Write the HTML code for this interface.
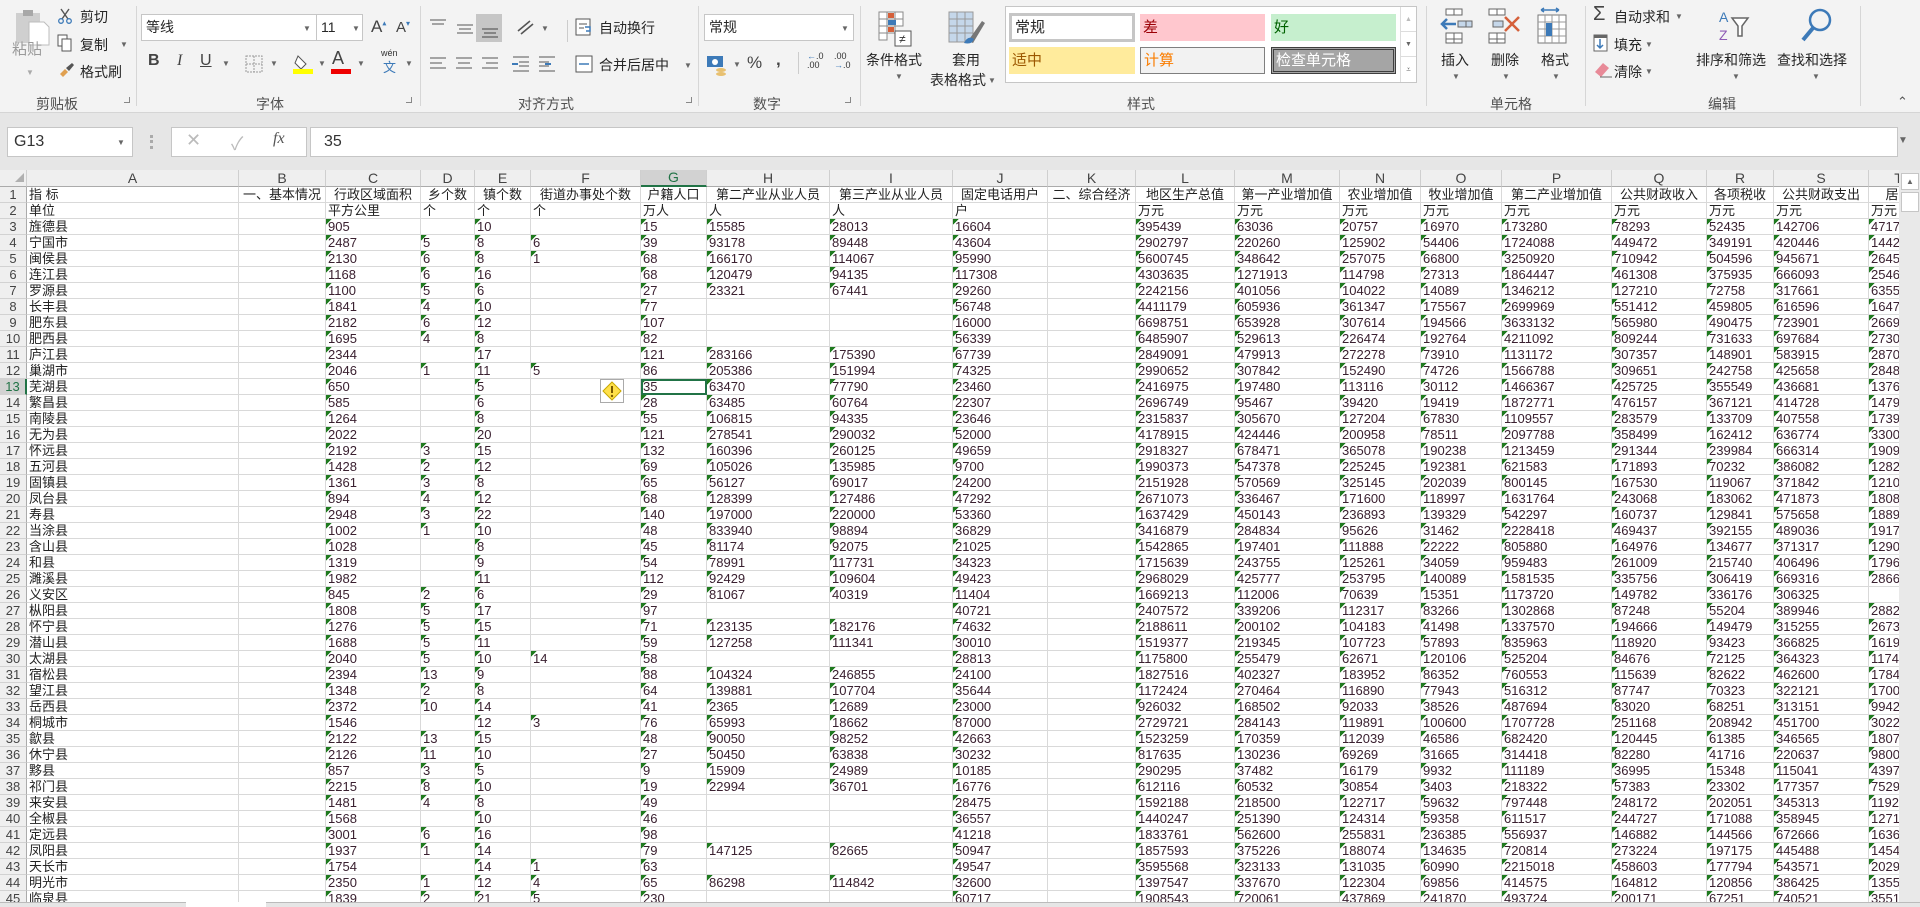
<!DOCTYPE html>
<html><head><meta charset="utf-8">
<style>
*{box-sizing:border-box;margin:0;padding:0}
body{width:1920px;height:907px;overflow:hidden;background:#e6e6e6;font-family:"Liberation Sans","Noto Sans CJK SC",sans-serif;position:relative;color:#262626}
.ab{position:absolute;white-space:nowrap}
#rib{position:absolute;left:0;top:0;width:1920px;height:113px;background:#f3f3f3;border-bottom:1px solid #d5d5d5}
.t{position:absolute;white-space:nowrap;font-size:14px;color:#262626}
.gl{position:absolute;top:94px;font-size:14px;color:#505050;white-space:nowrap}
.sep{position:absolute;top:6px;width:1px;height:100px;background:#d6d6d6}
.box{position:absolute;background:#fff;border:1px solid #c6c6c6;font-size:14px;padding-left:4px;line-height:25px}
.dd{position:absolute;font-size:8px;color:#666}
.corner{position:absolute;width:6px;height:6px;border-right:1px solid #888;border-bottom:1px solid #888}
#grid{position:absolute;left:0;top:170px;width:1899px;height:737px;overflow:hidden;background:#fff}
table{border-collapse:separate;border-spacing:0;table-layout:fixed;width:1929px;font-size:13px}
td,th{height:16px;line-height:15px;border-right:1px solid #d9d9d9;border-bottom:1px solid #d9d9d9;white-space:nowrap;overflow:hidden;padding:0 2px;font-weight:normal;text-align:left;color:#222}
thead th{background:#efefef;color:#444;text-align:center;border-right:1px solid #cfcfcf;border-bottom:1px solid #ababab;font-size:14px}
tbody th{background:#efefef;color:#444;text-align:center;border-right:1px solid #ababab;border-bottom:1px solid #d2d2d2;padding:0}
thead th.sel{background:#d2d2d2;color:#217346;border-bottom:2px solid #217346}
tbody th.sel{background:#d2d2d2;color:#217346;border-right:2px solid #217346}
tr.h1 td{text-align:center}
tr.h1 td:nth-child(2){text-align:left}
tr.d td:nth-child(n+4):not(:empty){background:linear-gradient(135deg,#1f7a1f 0,#1f7a1f 4px,transparent 4px) no-repeat 0 0/7px 7px}
tr.d td{color:#3a2030}
tr.d td:nth-child(2){color:#222}
</style></head><body>
<div id="rib">
<svg class="ab" style="left:14px;top:8px" width="38" height="38" viewBox="0 0 38 38"><rect x="2" y="5" width="24" height="30" fill="#cfcfcf"/><rect x="9" y="2" width="10" height="6" fill="#a8a8a8"/><path d="M15 14h15l5 5v18H15z" fill="#fff" stroke="#bdbdbd"/></svg>
<div class="t" style="left:12px;top:38px;color:#9a9a9a;font-size:15px">粘贴</div>
<div class="dd" style="left:26px;top:68px;color:#aaa">▼</div>
<svg class="ab" style="left:57px;top:8px" width="16" height="16" viewBox="0 0 16 16"><path d="M4 1l7 10M12 1L5 11" stroke="#555" stroke-width="1.4"/><circle cx="4" cy="13" r="2.3" fill="none" stroke="#3d7ab8" stroke-width="1.3"/><circle cx="12" cy="13" r="2.3" fill="none" stroke="#3d7ab8" stroke-width="1.3"/></svg>
<div class="t" style="left:80px;top:7px">剪切</div>
<svg class="ab" style="left:57px;top:34px" width="16" height="18" viewBox="0 0 16 18"><rect x="1" y="1" width="9" height="11" fill="#fff" stroke="#555"/><rect x="5" y="5" width="9" height="12" fill="#fff" stroke="#555"/></svg>
<div class="t" style="left:80px;top:35px">复制</div><div class="dd" style="left:120px;top:40px">▼</div>
<svg class="ab" style="left:57px;top:62px" width="18" height="16" viewBox="0 0 18 16"><path d="M3 12l5-5 3 3-5 5z" fill="#e0a050"/><path d="M9 6l6-5 2 2-5 6z" fill="#555"/></svg>
<div class="t" style="left:80px;top:62px">格式刷</div>
<div class="gl" style="left:36px;top:94px">剪贴板</div><div class="corner" style="left:124px;top:97px"></div>
<div class="sep" style="left:136px"></div>
<div class="box" style="left:141px;top:14px;width:176px;height:27px">等线</div><div class="dd" style="left:303px;top:24px">▼</div>
<div class="box" style="left:316px;top:14px;width:47px;height:27px">11</div><div class="dd" style="left:352px;top:24px">▼</div>
<div class="t" style="left:371px;top:17px;font-size:17px;color:#444">A<sup style="font-size:8px;color:#3d7ab8">▴</sup></div>
<div class="t" style="left:396px;top:19px;font-size:15px;color:#444">A<sup style="font-size:8px;color:#3d7ab8">▾</sup></div>
<div class="t" style="left:148px;top:52px;font-weight:bold;font-size:16px;color:#444">B</div>
<div class="t" style="left:177px;top:52px;font-style:italic;font-size:16px;color:#444;font-family:'Liberation Serif',serif">I</div>
<div class="t" style="left:200px;top:52px;text-decoration:underline;font-size:16px;color:#444">U</div><div class="dd" style="left:222px;top:59px">▼</div>
<svg class="ab" style="left:245px;top:55px" width="18" height="18"><rect x="1" y="1" width="16" height="16" fill="none" stroke="#999" stroke-dasharray="2 1"/><path d="M9 1v16M1 9h16" stroke="#999" stroke-dasharray="2 1"/></svg><div class="dd" style="left:270px;top:59px">▼</div>
<svg class="ab" style="left:292px;top:52px" width="22" height="22"><path d="M6 4l8 8-5 5-6-6z" fill="#fff" stroke="#555"/><rect x="1" y="17" width="20" height="5" fill="#ffff00"/></svg><div class="dd" style="left:318px;top:59px">▼</div>
<div class="t" style="left:332px;top:48px;font-size:18px;color:#444">A</div><div class="ab" style="left:331px;top:69px;width:20px;height:5px;background:#e00"></div><div class="dd" style="left:357px;top:59px">▼</div>
<div class="t" style="left:381px;top:48px;font-size:9px;color:#333">wén</div><div class="t" style="left:383px;top:57px;font-size:13px;color:#3d7ab8">文</div><div class="dd" style="left:405px;top:59px">▼</div>
<div class="gl" style="left:256px">字体</div><div class="corner" style="left:406px;top:97px"></div>
<div class="sep" style="left:420px"></div>
<svg class="ab" style="left:427px;top:14px" width="80" height="28"><path d="M3 6h16M5 10h12" stroke="#555"/><path d="M30 11h16M32 15h12M30 19h16" stroke="#555"/><rect x="49" y="0" width="26" height="28" fill="#c6c6c6"/><path d="M55 15h16M57 19h12M55 23h16" stroke="#444"/></svg>
<svg class="ab" style="left:515px;top:17px" width="22" height="20"><path d="M3 14l12-10M6 17l12-10" stroke="#555" stroke-width="1.6"/></svg><div class="dd" style="left:541px;top:24px">▼</div>
<div class="sep" style="left:567px;top:20px;height:22px;background:#ccc"></div>
<svg class="ab" style="left:575px;top:17px" width="18" height="20"><rect x="1" y="2" width="14" height="16" fill="#fff" stroke="#555"/><path d="M4 7h8M4 11h5" stroke="#555"/><path d="M10 10h5v4h-4" stroke="#3d7ab8" fill="none" stroke-width="1.5"/></svg>
<div class="t" style="left:599px;top:18px">自动换行</div>
<svg class="ab" style="left:427px;top:55px" width="150" height="20"><path d="M3 3h16M3 8h12M3 13h16" stroke="#555"/><path d="M29 3h16M31 8h12M29 13h16" stroke="#555"/><path d="M55 3h16M59 8h12M55 13h16" stroke="#555"/><path d="M86 2h16M92 7h10M92 11h10M86 16h16" stroke="#555"/><path d="M91 9h-6" stroke="#3d7ab8" stroke-width="2"/><path d="M112 2h16M112 7h10M112 11h10M112 16h16" stroke="#555"/><path d="M118 9h6" stroke="#3d7ab8" stroke-width="2"/></svg>
<svg class="ab" style="left:575px;top:55px" width="18" height="18"><rect x="1" y="1" width="16" height="16" fill="#fff" stroke="#555"/><path d="M4 9h10" stroke="#3d7ab8" stroke-width="1.5"/></svg>
<div class="t" style="left:599px;top:55px">合并后居中</div><div class="dd" style="left:684px;top:61px">▼</div>
<div class="gl" style="left:518px">对齐方式</div><div class="corner" style="left:686px;top:97px"></div>
<div class="sep" style="left:698px"></div>
<div class="box" style="left:704px;top:14px;width:150px;height:27px">常规</div><div class="dd" style="left:841px;top:24px">▼</div>
<svg class="ab" style="left:706px;top:55px" width="22" height="22"><rect x="1" y="1" width="16" height="11" fill="#3d7ab8"/><circle cx="9" cy="7" r="3" fill="#fff"/><ellipse cx="15" cy="15" rx="5" ry="2" fill="#e8c070"/><ellipse cx="15" cy="19" rx="5" ry="2" fill="#e8c070"/></svg><div class="dd" style="left:733px;top:60px">▼</div>
<div class="t" style="left:747px;top:53px;font-size:17px;color:#444">%</div>
<div class="t" style="left:776px;top:50px;font-size:17px;color:#444;font-weight:bold">,</div>
<div class="sep" style="left:798px;top:52px;height:22px;background:#ccc"></div>
<div class="t" style="left:807px;top:52px;font-size:9px;color:#333;line-height:9px"><span style="color:#3d7ab8">←</span>.0<br>.00</div>
<div class="t" style="left:834px;top:52px;font-size:9px;color:#333;line-height:9px">.00<br><span style="color:#3d7ab8">→</span>.0</div>
<div class="gl" style="left:753px">数字</div><div class="corner" style="left:845px;top:97px"></div>
<div class="sep" style="left:860px"></div>
<svg class="ab" style="left:878px;top:11px" width="38" height="36"><g stroke="#888" fill="#fff"><rect x="1" y="1" width="8" height="7"/><rect x="9" y="1" width="8" height="7"/><rect x="17" y="1" width="8" height="7"/><rect x="1" y="8" width="8" height="7"/><rect x="9" y="8" width="8" height="7"/><rect x="17" y="8" width="8" height="7"/><rect x="1" y="15" width="8" height="7"/><rect x="9" y="15" width="8" height="7"/><rect x="1" y="22" width="8" height="7"/></g><rect x="10" y="2" width="6" height="5" fill="#d5603a"/><rect x="10" y="9" width="8" height="5" fill="#3d7ab8"/><rect x="10" y="16" width="6" height="5" fill="#d5603a"/><rect x="17" y="20" width="16" height="15" fill="#fff" stroke="#555"/><text x="21" y="32" font-size="12" fill="#333">≠</text></svg>
<div class="t" style="left:866px;top:50px">条件格式</div><div class="dd" style="left:895px;top:72px">▼</div>
<svg class="ab" style="left:948px;top:11px" width="38" height="36"><g stroke="#999" fill="#c5d7ea"><rect x="1" y="1" width="24" height="30"/></g><path d="M1 8h24M1 15h24M1 22h24M9 1v30M17 1v30" stroke="#999"/><path d="M20 30l14-20 3 2-12 20z" fill="#777"/><path d="M16 32q4-8 10-4q-2 6-10 4z" fill="#3d7ab8"/></svg>
<div class="t" style="left:952px;top:50px">套用</div>
<div class="t" style="left:930px;top:70px">表格格式</div><div class="dd" style="left:988px;top:76px">▼</div>
<div class="ab" style="left:1005px;top:6px;width:412px;height:77px;background:#fff;border:1px solid #c6c6c6"></div>
<div class="ab" style="left:1009px;top:13px;width:126px;height:29px;border:3px solid #c6c6c6;background:#fff;font-size:15px;line-height:23px;padding-left:3px">常规</div>
<div class="ab" style="left:1140px;top:14px;width:125px;height:27px;background:#ffc7ce;color:#9c0006;font-size:15px;line-height:27px;padding-left:3px">差</div>
<div class="ab" style="left:1271px;top:14px;width:125px;height:27px;background:#c6efce;color:#006100;font-size:15px;line-height:27px;padding-left:3px">好</div>
<div class="ab" style="left:1009px;top:47px;width:126px;height:27px;background:#ffeb9c;color:#9c5700;font-size:15px;line-height:27px;padding-left:3px">适中</div>
<div class="ab" style="left:1140px;top:47px;width:125px;height:27px;background:#f2f2f2;border:1px solid #7f7f7f;color:#fa7d00;font-size:15px;line-height:25px;padding-left:3px">计算</div>
<div class="ab" style="left:1271px;top:47px;width:125px;height:27px;background:#a5a5a5;border:3px double #3f3f3f;color:#fff;font-size:15px;line-height:21px;padding-left:2px">检查单元格</div>
<div class="ab" style="left:1400px;top:7px;width:16px;height:75px;border-left:1px solid #ddd"><div style="height:25px;border-bottom:1px solid #ddd;font-size:7px;color:#bbb;text-align:center;line-height:25px">▲</div><div style="height:25px;border-bottom:1px solid #ddd;font-size:7px;color:#666;text-align:center;line-height:25px">▼</div><div style="font-size:8px;color:#666;text-align:center;line-height:25px">⩡</div></div>
<div class="gl" style="left:1127px">样式</div>
<div class="sep" style="left:1426px"></div>
<svg class="ab" style="left:1438px;top:8px" width="36" height="36"><g fill="#fff" stroke="#666"><rect x="8" y="1" width="8" height="6"/><rect x="16" y="1" width="8" height="6"/><rect x="8" y="25" width="8" height="6"/><rect x="16" y="25" width="8" height="6"/><rect x="8" y="31" width="8" height="4"/><rect x="16" y="31" width="8" height="4"/><rect x="20" y="13" width="8" height="6" fill="#c5d7ea"/><rect x="28" y="13" width="6" height="6" fill="#c5d7ea"/></g><path d="M18 16H4M9 11l-5 5 5 5" stroke="#3d7ab8" stroke-width="2.5" fill="none"/></svg>
<div class="t" style="left:1441px;top:50px">插入</div><div class="dd" style="left:1452px;top:72px">▼</div>
<svg class="ab" style="left:1488px;top:8px" width="36" height="36"><g fill="#fff" stroke="#666"><rect x="1" y="1" width="8" height="6"/><rect x="9" y="1" width="8" height="6"/><rect x="1" y="25" width="8" height="6"/><rect x="9" y="25" width="8" height="6"/><rect x="1" y="31" width="8" height="4"/><rect x="9" y="31" width="8" height="4"/><rect x="5" y="13" width="10" height="6" fill="#c5d7ea"/></g><path d="M17 9l14 14M31 9L17 23" stroke="#d5603a" stroke-width="2.5"/></svg>
<div class="t" style="left:1491px;top:50px">删除</div><div class="dd" style="left:1502px;top:72px">▼</div>
<svg class="ab" style="left:1537px;top:6px" width="36" height="40"><path d="M4 4h18M4 4l3-2M4 4l3 2M22 4l-3-2M22 4l-3 2" stroke="#3d7ab8" stroke-width="1.5" fill="none"/><g fill="#fff" stroke="#777"><rect x="1" y="9" width="28" height="28"/></g><path d="M1 16h28M1 23h28M1 30h28M8 9v28M15 9v28M22 9v28" stroke="#999"/><rect x="9" y="17" width="6" height="13" fill="#3d7ab8"/></svg>
<div class="t" style="left:1541px;top:50px">格式</div><div class="dd" style="left:1552px;top:72px">▼</div>
<div class="gl" style="left:1490px">单元格</div>
<div class="sep" style="left:1585px"></div>
<div class="t" style="left:1593px;top:3px;font-size:20px;color:#444">Σ</div>
<div class="t" style="left:1614px;top:7px">自动求和</div><div class="dd" style="left:1675px;top:12px">▼</div>
<svg class="ab" style="left:1593px;top:34px" width="16" height="18"><rect x="1" y="1" width="13" height="16" fill="#fff" stroke="#666"/><rect x="1" y="1" width="13" height="3" fill="#666"/><path d="M7 5v9M4 11l3 3 3-3" stroke="#3d7ab8" stroke-width="1.5" fill="none"/></svg>
<div class="t" style="left:1614px;top:35px">填充</div><div class="dd" style="left:1645px;top:40px">▼</div>
<svg class="ab" style="left:1593px;top:60px" width="20" height="18"><path d="M2 12l8-9 6 5-8 9z" fill="#e88a98"/><path d="M7 17h12" stroke="#666"/></svg>
<div class="t" style="left:1614px;top:62px">清除</div><div class="dd" style="left:1645px;top:67px">▼</div>
<svg class="ab" style="left:1718px;top:8px" width="36" height="36"><text x="1" y="14" font-size="14" fill="#3d7ab8" font-family="Liberation Sans">A</text><text x="1" y="32" font-size="14" fill="#8e5bb5" font-family="Liberation Sans">Z</text><path d="M14 10h16l-6 8v10h-4V18z" fill="#fff" stroke="#666" stroke-width="1.5"/></svg>
<div class="t" style="left:1696px;top:50px">排序和筛选</div><div class="dd" style="left:1732px;top:72px">▼</div>
<svg class="ab" style="left:1798px;top:6px" width="36" height="40"><circle cx="22" cy="14" r="10" fill="none" stroke="#3d7ab8" stroke-width="2.5"/><path d="M15 22L5 34" stroke="#3d7ab8" stroke-width="4"/></svg>
<div class="t" style="left:1777px;top:50px">查找和选择</div><div class="dd" style="left:1812px;top:72px">▼</div>
<div class="gl" style="left:1708px">编辑</div>
<div class="sep" style="left:1860px"></div>
<div class="t" style="left:1897px;top:94px;font-size:13px;color:#555">⌃</div>
</div>
<div class="ab" style="left:7px;top:127px;width:126px;height:30px;background:#fff;border:1px solid #c6c6c6;font-size:16px;line-height:28px;padding-left:6px;color:#333">G13</div>
<div class="dd" style="left:117px;top:138px">▼</div>
<div class="ab" style="left:150px;top:135px;width:3px;height:14px;border-left:3px dotted #aaa"></div>
<div class="ab" style="left:171px;top:127px;width:136px;height:30px;background:#fff;border:1px solid #c6c6c6"></div>
<div class="ab" style="left:186px;top:130px;font-size:18px;color:#bbb">✕</div>
<div class="ab" style="left:231px;top:130px;font-size:18px;color:#bbb">✓</div>
<div class="ab" style="left:273px;top:130px;font-size:16px;color:#555;font-style:italic;font-family:'Liberation Serif',serif">fx</div>
<div class="ab" style="left:310px;top:127px;width:1588px;height:30px;background:#fff;border:1px solid #c6c6c6;font-size:16px;line-height:28px;padding-left:13px;color:#333">35</div>
<div class="ab" style="left:1898px;top:135px;font-size:10px;color:#666">▼</div>
<div id="grid">
<table>
<colgroup><col style="width:27px"><col style="width:212px"><col style="width:87px"><col style="width:95px"><col style="width:54px"><col style="width:56px"><col style="width:110px"><col style="width:66px"><col style="width:123px"><col style="width:123px"><col style="width:95px"><col style="width:88px"><col style="width:99px"><col style="width:105px"><col style="width:81px"><col style="width:81px"><col style="width:110px"><col style="width:95px"><col style="width:67px"><col style="width:95px"><col style="width:60px"></colgroup>
<thead><tr><th style="font-size:9px;color:#b0b0b0;text-align:right">◢</th><th>A</th><th>B</th><th>C</th><th>D</th><th>E</th><th>F</th><th class="sel">G</th><th>H</th><th>I</th><th>J</th><th>K</th><th>L</th><th>M</th><th>N</th><th>O</th><th>P</th><th>Q</th><th>R</th><th>S</th><th>T</th></tr></thead>
<tbody>
<tr class="h1"><th>1</th><td>指 标</td><td>一、基本情况</td><td>行政区域面积</td><td>乡个数</td><td>镇个数</td><td>街道办事处个数</td><td>户籍人口</td><td>第二产业从业人员</td><td>第三产业从业人员</td><td>固定电话用户</td><td>二、综合经济</td><td>地区生产总值</td><td>第一产业增加值</td><td>农业增加值</td><td>牧业增加值</td><td>第二产业增加值</td><td>公共财政收入</td><td>各项税收</td><td>公共财政支出</td><td>居民</td></tr>
<tr><th>2</th><td>单位</td><td></td><td>平方公里</td><td>个</td><td>个</td><td>个</td><td>万人</td><td>人</td><td>人</td><td>户</td><td></td><td>万元</td><td>万元</td><td>万元</td><td>万元</td><td>万元</td><td>万元</td><td>万元</td><td>万元</td><td>万元</td></tr>
<tr class="d"><th>3</th><td>旌德县</td><td></td><td>905</td><td></td><td>10</td><td></td><td>15</td><td>15585</td><td>28013</td><td>16604</td><td></td><td>395439</td><td>63036</td><td>20757</td><td>16970</td><td>173280</td><td>78293</td><td>52435</td><td>142706</td><td>4717</td></tr>
<tr class="d"><th>4</th><td>宁国市</td><td></td><td>2487</td><td>5</td><td>8</td><td>6</td><td>39</td><td>93178</td><td>89448</td><td>43604</td><td></td><td>2902797</td><td>220260</td><td>125902</td><td>54406</td><td>1724088</td><td>449472</td><td>349191</td><td>420446</td><td>1442</td></tr>
<tr class="d"><th>5</th><td>闽侯县</td><td></td><td>2130</td><td>6</td><td>8</td><td>1</td><td>68</td><td>166170</td><td>114067</td><td>95990</td><td></td><td>5600745</td><td>348642</td><td>257075</td><td>66800</td><td>3250920</td><td>710942</td><td>504596</td><td>945671</td><td>2645</td></tr>
<tr class="d"><th>6</th><td>连江县</td><td></td><td>1168</td><td>6</td><td>16</td><td></td><td>68</td><td>120479</td><td>94135</td><td>117308</td><td></td><td>4303635</td><td>1271913</td><td>114798</td><td>27313</td><td>1864447</td><td>461308</td><td>375935</td><td>666093</td><td>2546</td></tr>
<tr class="d"><th>7</th><td>罗源县</td><td></td><td>1100</td><td>5</td><td>6</td><td></td><td>27</td><td>23321</td><td>67441</td><td>29260</td><td></td><td>2242156</td><td>401056</td><td>104022</td><td>14089</td><td>1346212</td><td>127210</td><td>72758</td><td>317661</td><td>6355</td></tr>
<tr class="d"><th>8</th><td>长丰县</td><td></td><td>1841</td><td>4</td><td>10</td><td></td><td>77</td><td></td><td></td><td>56748</td><td></td><td>4411179</td><td>605936</td><td>361347</td><td>175567</td><td>2699969</td><td>551412</td><td>459805</td><td>616596</td><td>1647</td></tr>
<tr class="d"><th>9</th><td>肥东县</td><td></td><td>2182</td><td>6</td><td>12</td><td></td><td>107</td><td></td><td></td><td>16000</td><td></td><td>6698751</td><td>653928</td><td>307614</td><td>194566</td><td>3633132</td><td>565980</td><td>490475</td><td>723901</td><td>2669</td></tr>
<tr class="d"><th>10</th><td>肥西县</td><td></td><td>1695</td><td>4</td><td>8</td><td></td><td>82</td><td></td><td></td><td>56339</td><td></td><td>6485907</td><td>529613</td><td>226474</td><td>192764</td><td>4211092</td><td>809244</td><td>731633</td><td>697684</td><td>2730</td></tr>
<tr class="d"><th>11</th><td>庐江县</td><td></td><td>2344</td><td></td><td>17</td><td></td><td>121</td><td>283166</td><td>175390</td><td>67739</td><td></td><td>2849091</td><td>479913</td><td>272278</td><td>73910</td><td>1131172</td><td>307357</td><td>148901</td><td>583915</td><td>2870</td></tr>
<tr class="d"><th>12</th><td>巢湖市</td><td></td><td>2046</td><td>1</td><td>11</td><td>5</td><td>86</td><td>205386</td><td>151994</td><td>74325</td><td></td><td>2990652</td><td>307842</td><td>152490</td><td>74726</td><td>1566788</td><td>309651</td><td>242758</td><td>425658</td><td>2848</td></tr>
<tr class="d"><th class="sel">13</th><td>芜湖县</td><td></td><td>650</td><td></td><td>5</td><td></td><td style="outline:2px solid #217346;outline-offset:-2px">35</td><td>63470</td><td>77790</td><td>23460</td><td></td><td>2416975</td><td>197480</td><td>113116</td><td>30112</td><td>1466367</td><td>425725</td><td>355549</td><td>436681</td><td>1376</td></tr>
<tr class="d"><th>14</th><td>繁昌县</td><td></td><td>585</td><td></td><td>6</td><td></td><td>28</td><td>63485</td><td>60764</td><td>22307</td><td></td><td>2696749</td><td>95467</td><td>39420</td><td>19419</td><td>1872771</td><td>476157</td><td>367121</td><td>414728</td><td>1479</td></tr>
<tr class="d"><th>15</th><td>南陵县</td><td></td><td>1264</td><td></td><td>8</td><td></td><td>55</td><td>106815</td><td>94335</td><td>23646</td><td></td><td>2315837</td><td>305670</td><td>127204</td><td>67830</td><td>1109557</td><td>283579</td><td>133709</td><td>407558</td><td>1739</td></tr>
<tr class="d"><th>16</th><td>无为县</td><td></td><td>2022</td><td></td><td>20</td><td></td><td>121</td><td>278541</td><td>290032</td><td>52000</td><td></td><td>4178915</td><td>424446</td><td>200958</td><td>78511</td><td>2097788</td><td>358499</td><td>162412</td><td>636774</td><td>3300</td></tr>
<tr class="d"><th>17</th><td>怀远县</td><td></td><td>2192</td><td>3</td><td>15</td><td></td><td>132</td><td>160396</td><td>260125</td><td>49659</td><td></td><td>2918327</td><td>678471</td><td>365078</td><td>190238</td><td>1213459</td><td>291344</td><td>239984</td><td>666314</td><td>1909</td></tr>
<tr class="d"><th>18</th><td>五河县</td><td></td><td>1428</td><td>2</td><td>12</td><td></td><td>69</td><td>105026</td><td>135985</td><td>9700</td><td></td><td>1990373</td><td>547378</td><td>225245</td><td>192381</td><td>621583</td><td>171893</td><td>70232</td><td>386082</td><td>1282</td></tr>
<tr class="d"><th>19</th><td>固镇县</td><td></td><td>1361</td><td>3</td><td>8</td><td></td><td>65</td><td>56127</td><td>69017</td><td>24200</td><td></td><td>2151928</td><td>570569</td><td>325145</td><td>202039</td><td>800145</td><td>167530</td><td>119067</td><td>371842</td><td>1210</td></tr>
<tr class="d"><th>20</th><td>凤台县</td><td></td><td>894</td><td>4</td><td>12</td><td></td><td>68</td><td>128399</td><td>127486</td><td>47292</td><td></td><td>2671073</td><td>336467</td><td>171600</td><td>118997</td><td>1631764</td><td>243068</td><td>183062</td><td>471873</td><td>1808</td></tr>
<tr class="d"><th>21</th><td>寿县</td><td></td><td>2948</td><td>3</td><td>22</td><td></td><td>140</td><td>197000</td><td>220000</td><td>53360</td><td></td><td>1637429</td><td>450143</td><td>236893</td><td>139329</td><td>542297</td><td>160737</td><td>129841</td><td>575658</td><td>1889</td></tr>
<tr class="d"><th>22</th><td>当涂县</td><td></td><td>1002</td><td>1</td><td>10</td><td></td><td>48</td><td>833940</td><td>98894</td><td>36829</td><td></td><td>3416879</td><td>284834</td><td>95626</td><td>31462</td><td>2228418</td><td>469437</td><td>392155</td><td>489036</td><td>1917</td></tr>
<tr class="d"><th>23</th><td>含山县</td><td></td><td>1028</td><td></td><td>8</td><td></td><td>45</td><td>81174</td><td>92075</td><td>21025</td><td></td><td>1542865</td><td>197401</td><td>111888</td><td>22222</td><td>805880</td><td>164976</td><td>134677</td><td>371317</td><td>1290</td></tr>
<tr class="d"><th>24</th><td>和县</td><td></td><td>1319</td><td></td><td>9</td><td></td><td>54</td><td>78991</td><td>117731</td><td>34323</td><td></td><td>1715639</td><td>243755</td><td>125261</td><td>34059</td><td>959483</td><td>261009</td><td>215740</td><td>406496</td><td>1796</td></tr>
<tr class="d"><th>25</th><td>濉溪县</td><td></td><td>1982</td><td></td><td>11</td><td></td><td>112</td><td>92429</td><td>109604</td><td>49423</td><td></td><td>2968029</td><td>425777</td><td>253795</td><td>140089</td><td>1581535</td><td>335756</td><td>306419</td><td>669316</td><td>2866</td></tr>
<tr class="d"><th>26</th><td>义安区</td><td></td><td>845</td><td>2</td><td>6</td><td></td><td>29</td><td>81067</td><td>40319</td><td>11404</td><td></td><td>1669213</td><td>112006</td><td>70639</td><td>15351</td><td>1173720</td><td>149782</td><td>336176</td><td>306325</td><td></td></tr>
<tr class="d"><th>27</th><td>枞阳县</td><td></td><td>1808</td><td>5</td><td>17</td><td></td><td>97</td><td></td><td></td><td>40721</td><td></td><td>2407572</td><td>339206</td><td>112317</td><td>83266</td><td>1302868</td><td>87248</td><td>55204</td><td>389946</td><td>2882</td></tr>
<tr class="d"><th>28</th><td>怀宁县</td><td></td><td>1276</td><td>5</td><td>15</td><td></td><td>71</td><td>123135</td><td>182176</td><td>74632</td><td></td><td>2188611</td><td>200102</td><td>104183</td><td>41498</td><td>1337570</td><td>194666</td><td>149479</td><td>315255</td><td>2673</td></tr>
<tr class="d"><th>29</th><td>潜山县</td><td></td><td>1688</td><td>5</td><td>11</td><td></td><td>59</td><td>127258</td><td>111341</td><td>30010</td><td></td><td>1519377</td><td>219345</td><td>107723</td><td>57893</td><td>835963</td><td>118920</td><td>93423</td><td>366825</td><td>1619</td></tr>
<tr class="d"><th>30</th><td>太湖县</td><td></td><td>2040</td><td>5</td><td>10</td><td>14</td><td>58</td><td></td><td></td><td>28813</td><td></td><td>1175800</td><td>255479</td><td>62671</td><td>120106</td><td>525204</td><td>84676</td><td>72125</td><td>364323</td><td>1174</td></tr>
<tr class="d"><th>31</th><td>宿松县</td><td></td><td>2394</td><td>13</td><td>9</td><td></td><td>88</td><td>104324</td><td>246855</td><td>24100</td><td></td><td>1827516</td><td>402327</td><td>183952</td><td>86352</td><td>760553</td><td>115639</td><td>82622</td><td>462600</td><td>1784</td></tr>
<tr class="d"><th>32</th><td>望江县</td><td></td><td>1348</td><td>2</td><td>8</td><td></td><td>64</td><td>139881</td><td>107704</td><td>35644</td><td></td><td>1172424</td><td>270464</td><td>116890</td><td>77943</td><td>516312</td><td>87747</td><td>70323</td><td>322121</td><td>1700</td></tr>
<tr class="d"><th>33</th><td>岳西县</td><td></td><td>2372</td><td>10</td><td>14</td><td></td><td>41</td><td>2365</td><td>12689</td><td>23000</td><td></td><td>926032</td><td>168502</td><td>92033</td><td>38526</td><td>487694</td><td>83020</td><td>68251</td><td>313151</td><td>9942</td></tr>
<tr class="d"><th>34</th><td>桐城市</td><td></td><td>1546</td><td></td><td>12</td><td>3</td><td>76</td><td>65993</td><td>18662</td><td>87000</td><td></td><td>2729721</td><td>284143</td><td>119891</td><td>100600</td><td>1707728</td><td>251168</td><td>208942</td><td>451700</td><td>3022</td></tr>
<tr class="d"><th>35</th><td>歙县</td><td></td><td>2122</td><td>13</td><td>15</td><td></td><td>48</td><td>90050</td><td>98252</td><td>42663</td><td></td><td>1523259</td><td>170359</td><td>112039</td><td>46586</td><td>682420</td><td>120445</td><td>61385</td><td>346565</td><td>1807</td></tr>
<tr class="d"><th>36</th><td>休宁县</td><td></td><td>2126</td><td>11</td><td>10</td><td></td><td>27</td><td>50450</td><td>63838</td><td>30232</td><td></td><td>817635</td><td>130236</td><td>69269</td><td>31665</td><td>314418</td><td>82280</td><td>41716</td><td>220637</td><td>9800</td></tr>
<tr class="d"><th>37</th><td>黟县</td><td></td><td>857</td><td>3</td><td>5</td><td></td><td>9</td><td>15909</td><td>24989</td><td>10185</td><td></td><td>290295</td><td>37482</td><td>16179</td><td>9932</td><td>111189</td><td>36995</td><td>15348</td><td>115041</td><td>4397</td></tr>
<tr class="d"><th>38</th><td>祁门县</td><td></td><td>2215</td><td>8</td><td>10</td><td></td><td>19</td><td>22994</td><td>36701</td><td>16776</td><td></td><td>612116</td><td>60532</td><td>30854</td><td>3403</td><td>218322</td><td>57383</td><td>23302</td><td>177357</td><td>7529</td></tr>
<tr class="d"><th>39</th><td>来安县</td><td></td><td>1481</td><td>4</td><td>8</td><td></td><td>49</td><td></td><td></td><td>28475</td><td></td><td>1592188</td><td>218500</td><td>122717</td><td>59632</td><td>797448</td><td>248172</td><td>202051</td><td>345313</td><td>1192</td></tr>
<tr class="d"><th>40</th><td>全椒县</td><td></td><td>1568</td><td></td><td>10</td><td></td><td>46</td><td></td><td></td><td>36557</td><td></td><td>1440247</td><td>251390</td><td>124314</td><td>59358</td><td>611517</td><td>244727</td><td>171088</td><td>358945</td><td>1271</td></tr>
<tr class="d"><th>41</th><td>定远县</td><td></td><td>3001</td><td>6</td><td>16</td><td></td><td>98</td><td></td><td></td><td>41218</td><td></td><td>1833761</td><td>562600</td><td>255831</td><td>236385</td><td>556937</td><td>146882</td><td>144566</td><td>672666</td><td>1636</td></tr>
<tr class="d"><th>42</th><td>凤阳县</td><td></td><td>1937</td><td>1</td><td>14</td><td></td><td>79</td><td>147125</td><td>82665</td><td>50947</td><td></td><td>1857593</td><td>375226</td><td>188074</td><td>134635</td><td>720814</td><td>273224</td><td>197175</td><td>445488</td><td>1454</td></tr>
<tr class="d"><th>43</th><td>天长市</td><td></td><td>1754</td><td></td><td>14</td><td>1</td><td>63</td><td></td><td></td><td>49547</td><td></td><td>3595568</td><td>323133</td><td>131035</td><td>60990</td><td>2215018</td><td>458603</td><td>177794</td><td>543571</td><td>2029</td></tr>
<tr class="d"><th>44</th><td>明光市</td><td></td><td>2350</td><td>1</td><td>12</td><td>4</td><td>65</td><td>86298</td><td>114842</td><td>32600</td><td></td><td>1397547</td><td>337670</td><td>122304</td><td>69856</td><td>414575</td><td>164812</td><td>120856</td><td>386425</td><td>1355</td></tr>
<tr class="d"><th>45</th><td>临泉县</td><td></td><td>1839</td><td>2</td><td>21</td><td>5</td><td>230</td><td></td><td></td><td>60717</td><td></td><td>1908543</td><td>720061</td><td>437869</td><td>241870</td><td>493724</td><td>200171</td><td>67251</td><td>740521</td><td>3551</td></tr>
</tbody></table>
</div>
<div class="ab" style="left:600px;top:379px;width:24px;height:24px;background:#fff;border:1px solid #aaa"></div>
<svg class="ab" style="left:602px;top:381px" width="20" height="20"><path d="M10 1l9 9-9 9-9-9z" fill="#ffe04a" stroke="#c9a800"/><path d="M10 5v7" stroke="#7a5a00" stroke-width="2"/><circle cx="10" cy="15" r="1.2" fill="#7a5a00"/></svg>
<div class="ab" style="left:1899px;top:170px;width:21px;height:737px;background:#e9e9e9"></div>
<div class="ab" style="left:1901px;top:173px;width:18px;height:17px;background:#fff;border:1px solid #c6c6c6;font-size:8px;color:#666;text-align:center;line-height:15px">▲</div>
<div class="ab" style="left:1901px;top:192px;width:18px;height:20px;background:#fff;border:1px solid #c6c6c6"></div>
<div class="ab" style="left:0;top:902px;width:1920px;height:5px;background:#e6e6e6;border-top:1px solid #bbb"></div>
<div class="ab" style="left:186px;top:902px;width:80px;height:5px;background:#fff"></div>
</body></html>
